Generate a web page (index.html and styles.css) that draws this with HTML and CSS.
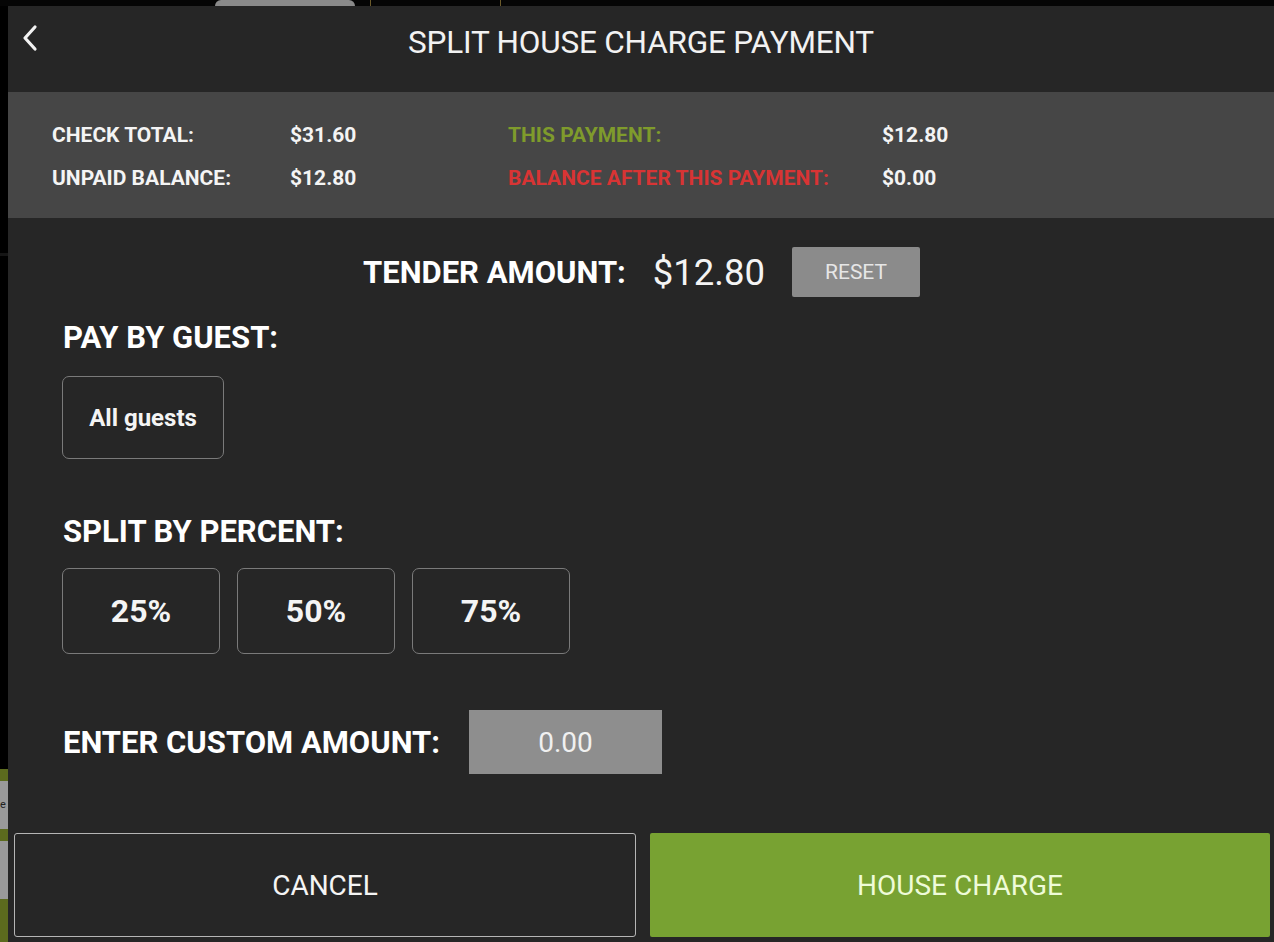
FILE: index.html
```html
<!DOCTYPE html>
<html>
<head>
<meta charset="utf-8">
<link rel="stylesheet" href="styles.css">
</head>
<body>
<div class="screen">
  <div class="topstrip">
    <div class="tab"></div>
    <div class="gold gold-a"></div>
    <div class="gold gold-b"></div>
  </div>
  <div class="main">
    <div class="leftstrip">
      <div class="ls ls-dark"></div>
      <div class="ls ls-black"></div>
      <div class="ls ls-olive1"></div>
      <div class="ls ls-gray1">e</div>
      <div class="ls ls-olive2"></div>
      <div class="ls ls-gray2"></div>
      <div class="ls ls-olive3"></div>
    </div>
    <div class="dialog">
      <header class="header">
        <svg class="back" width="20" height="30" viewBox="0 0 20 30"><path d="M15 4 L5 15 L15 26" fill="none" stroke="#f2f2f2" stroke-width="3.2" stroke-linecap="round" stroke-linejoin="round"/></svg>
        <h1 class="title">SPLIT HOUSE CHARGE PAYMENT</h1>
      </header>
      <section class="summary">
        <div class="srow">
          <span class="lbl c1">CHECK TOTAL:</span>
          <span class="val c2">$31.60</span>
          <span class="lbl c3 green">THIS PAYMENT:</span>
          <span class="val c4">$12.80</span>
        </div>
        <div class="srow">
          <span class="lbl c1">UNPAID BALANCE:</span>
          <span class="val c2">$12.80</span>
          <span class="lbl c3 red">BALANCE AFTER THIS PAYMENT:</span>
          <span class="val c4">$0.00</span>
        </div>
      </section>
      <section class="body">
        <div class="tender">
          <span class="tender-lbl">TENDER AMOUNT:</span>
          <span class="tender-val">$12.80</span>
          <button class="reset">RESET</button>
        </div>
        <h2 class="sec sec-guest">PAY BY GUEST:</h2>
        <button class="obtn guest">All guests</button>
        <h2 class="sec sec-split">SPLIT BY PERCENT:</h2>
        <div class="pcts">
          <button class="obtn pct">25%</button>
          <button class="obtn pct">50%</button>
          <button class="obtn pct">75%</button>
        </div>
        <div class="custom">
          <span class="custom-lbl">ENTER CUSTOM AMOUNT:</span>
          <div class="custom-input">0.00</div>
        </div>
      </section>
      <footer class="actions">
        <button class="act cancel">CANCEL</button>
        <button class="act charge">HOUSE CHARGE</button>
      </footer>
    </div>
  </div>
</div>
</body>
</html>
```
FILE: styles.css
```css
* { box-sizing: border-box; }
html, body { margin: 0; padding: 0; }
body {
  background: #000;
  font-family: Roboto, "Liberation Sans", sans-serif;
  color: #fff;
  width: 1274px;
  height: 942px;
  overflow: hidden;
}
.screen { display: flex; flex-direction: column; height: 942px; }
.topstrip {
  height: 6px;
  flex: none;
  display: flex;
  background: #050505;
}
.tab {
  margin-left: 215px;
  width: 140px;
  height: 6px;
  background: #8a8a8a;
  border-radius: 6px 6px 0 0;
}
.gold { width: 1px; height: 6px; background: #6b5a2a; }
.gold-a { margin-left: 15px; }
.gold-b { margin-left: 129px; }

.main { flex: 1; display: flex; min-height: 0; }
.leftstrip { width: 8px; flex: none; display: flex; flex-direction: column; background: #000; }
.ls { flex: none; }
.ls-dark { height: 250px; background: #000; border-bottom: 3px solid #151515; }
.ls-black { height: 513px; }
.ls-olive1 { height: 12px; background: #5c6b1e; }
.ls-gray1 { height: 48px; background: #9a9a9a; color: #222; font-size: 11px; line-height: 48px; overflow: hidden; }
.ls-olive2 { height: 12px; background: #5c6b1e; }
.ls-gray2 { height: 58px; background: #9a9a9a; }
.ls-olive3 { flex: 1; background: #5c6b1e; }

.dialog { flex: 1; display: flex; flex-direction: column; background: #262626; }

.header {
  height: 86px;
  flex: none;
  position: relative;
  display: flex;
  align-items: center;
  justify-content: center;
  background: #262626;
}
.back { position: absolute; left: 12px; top: 17px; }
.title {
  margin: 0;
  font-weight: 400;
  font-size: 31.5px;
  letter-spacing: -0.2px;
  color: #f2f2f2;
  padding-bottom: 14px;
}

.summary {
  height: 126px;
  flex: none;
  background: #464646;
  padding: 33px 0 0 44px;
  display: flex;
  flex-direction: column;
  gap: 23px;
}
.srow { display: flex; align-items: center; height: 20px; }
.lbl, .val {
  font-weight: 700;
  font-size: 21px;
  letter-spacing: 0;
  color: #f4f4f4;
  white-space: nowrap;
}
.c1 { width: 238px; }
.c2 { width: 218px; }
.c3 { width: 374px; }
.green { color: #7f9b2c; }
.red { color: #d83434; }

.body { flex: 1; padding: 29px 0 0 55px; display: flex; flex-direction: column; align-items: flex-start; }
.tender { display: flex; align-items: center; height: 50px; margin-left: 300px; }
.tender-lbl { font-weight: 700; font-size: 31px; color: #fff; }
.tender-val { font-weight: 400; font-size: 36.5px; color: #f4f4f4; margin-left: 27px; }
.reset {
  margin-left: 27px;
  width: 128px;
  height: 50px;
  border: none;
  border-radius: 2px;
  background: #8b8b8b;
  color: #e6e6e6;
  font-family: Roboto, "Liberation Sans", sans-serif;
  font-size: 21px;
  font-weight: 400;
}
.sec {
  margin: 0;
  font-weight: 700;
  font-size: 31px;
  line-height: 30px;
  color: #fff;
}
.sec-guest { margin-top: 26px; }
.sec-split { margin-top: 58px; }
.obtn {
  background: #262626;
  border: 1.5px solid #7a7a7a;
  border-radius: 7px;
  color: #f4f4f4;
  font-family: Roboto, "Liberation Sans", sans-serif;
  font-weight: 700;
  padding: 0;
}
.guest { margin-top: 23px; margin-left: -1px; width: 162px; height: 83px; font-size: 24px; }
.pcts { margin-top: 21px; margin-left: -1px; display: flex; gap: 17px; }
.pct { width: 158px; height: 86px; font-size: 32px; }
.custom { margin-top: 56px; display: flex; align-items: center; }
.custom-lbl { font-weight: 700; font-size: 31px; color: #fff; }
.custom-input {
  margin-left: 29px;
  width: 193px;
  height: 64px;
  background: #8e8e8e;
  color: #f0f0f0;
  font-size: 28px;
  display: flex;
  align-items: center;
  justify-content: center;
}

.actions { flex: none; display: flex; gap: 14px; padding: 0 4px 5px 6px; height: 109px; }
.act {
  flex: 1;
  height: 104px;
  font-family: Roboto, "Liberation Sans", sans-serif;
  font-size: 28px;
  font-weight: 400;
}
.cancel { background: #262626; border: 1.5px solid #b5b5b5; border-radius: 3px; color: #f4f4f4; }
.charge { background: #78a232; border: none; border-radius: 2px; color: #eefbd8; }
```
